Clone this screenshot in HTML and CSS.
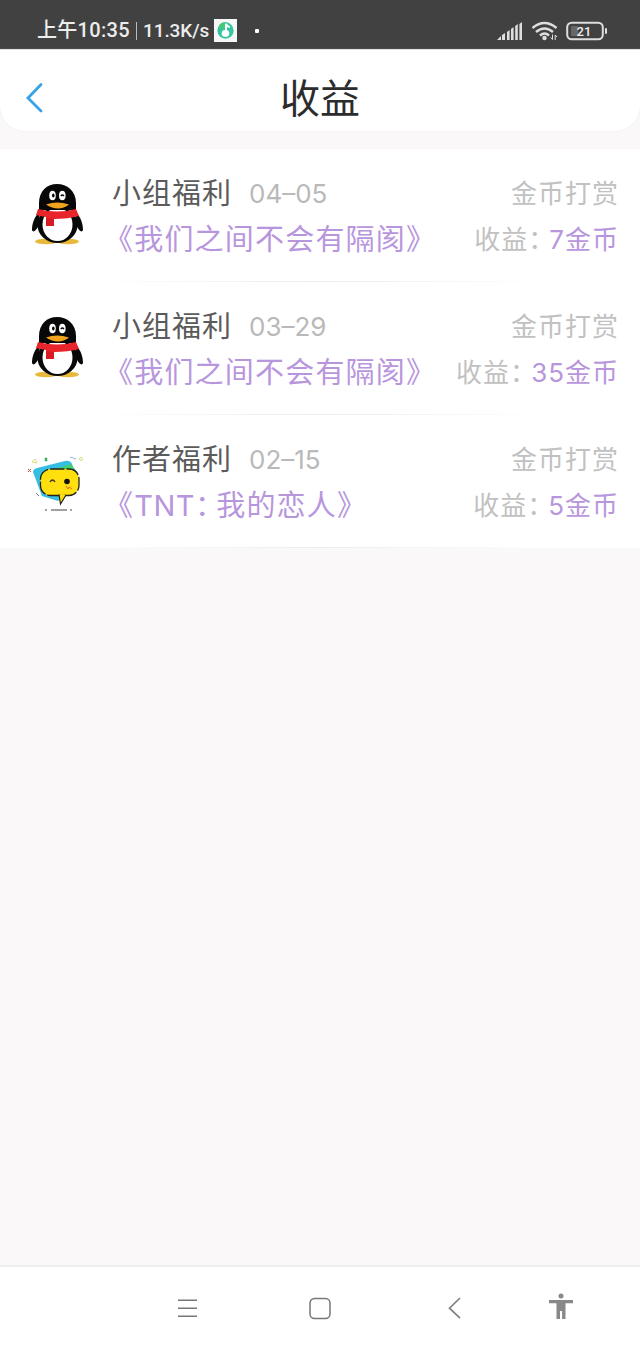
FILE: index.html
```html
<!DOCTYPE html>
<html lang="zh-CN">
<head>
<meta charset="utf-8">
<title>收益</title>
<link rel="stylesheet" href="styles.css">
</head>
<body>
<svg width="0" height="0" class="defs">
  <symbol id="penguin" viewBox="0 0 56 64">
    <ellipse cx="17" cy="59.500" rx="11" ry="2.800" fill="#e9b93c"/><ellipse cx="39" cy="59.500" rx="11" ry="2.800" fill="#e9b93c"/>
    <path d="M11 29C5 35 3 42 3 48c1 3 4 1 7-5zM46 29c6 6 8 13 8 19-1 3-4 1-7-5z" fill="#080808"/>
    <ellipse cx="28.500" cy="43" rx="20" ry="18" fill="#080808"/>
    <ellipse cx="28.500" cy="42.500" rx="15" ry="16.500" fill="#fff"/>
    <path d="M10 28V21C10 9 18 2 28 2s19 7 19 19v7z" fill="#080808"/>
    <ellipse cx="23.500" cy="13.500" rx="3.300" ry="4.700" fill="#fff"/><ellipse cx="33.300" cy="13.500" rx="3.300" ry="4.700" fill="#fff"/>
    <ellipse cx="24.300" cy="13.500" rx="1.300" ry="2" fill="#080808"/><path d="M31.800 14q1.500-2 3.200 0" fill="none" stroke="#080808" stroke-width="1.300"/>
    <path d="M17 22.500q11-4 23 0-5 4-11 4t-12-4z" fill="#f2a51c"/>
    <path d="M9 27q19 5 38 0l3 7q-11 3-25 3v7h-8v-9q-6-1-10-2z" fill="#e8252b"/>
    <path d="M17 36v8h8v-7z" fill="#d81b22"/>
  </symbol>
</svg>
<header class="status">
  <span class="time">上午10:35</span><i class="bar"></i><span class="speed">11.3K/s</span>
  <svg class="app" viewBox="0 0 24 24"><rect width="24" height="24" fill="#f7f7f7"/><circle cx="12" cy="12" r="8.500" fill="#35c6a0"/><path d="M5 7a8.500 8.500 0 0 1 8-3.400V8l-3 3z" fill="#46c878"/><ellipse cx="12" cy="15" rx="4" ry="3.600" fill="#fff"/><path d="M12.500 15V5q1 3 4 3.500" fill="none" stroke="#fff" stroke-width="2"/></svg>
  <i class="dot"></i>
  <svg class="signals" viewBox="0 0 112 22">
    <g fill="#dedede"><path d="M0 20l4-4v4zM5 15l3-2v7H5zM10 12l2.600-2v10H10zM14 9l2.600-2v13H14zM18.200 6l2.600-2v16h-2.600zM22.400 4L25 2v18h-2.600z"/></g>
    <g fill="none" stroke="#dedede" stroke-width="2.500"><path d="M35.500 8Q47.500-2 59.500 8M39 12q8.500-7 17 0M43 15.500q4.500-4 9 0"/></g>
    <circle cx="47.500" cy="18" r="2.200" fill="#dedede"/><path d="M55.500 14.500v5l-1.800-2M58.200 20v-5l1.800 2" fill="none" stroke="#dedede"/>
    <rect x="70.200" y="2.700" width="35.600" height="16.600" rx="4.500" fill="none" stroke="#dedede" stroke-width="2"/><rect x="74" y="6" width="7" height="10" rx="1" fill="#686868"/>
    <rect x="108" y="8" width="2" height="6" rx="1" fill="#dedede"/>
    <text x="87" y="15.800" text-anchor="middle" class="battery">21</text>
  </svg>
</header>
<div class="nav-wrap"><nav class="nav">
  <svg class="back" viewBox="0 0 20 34"><path d="M18 3.500L5 17l13 13" fill="none" stroke="#37a3e6" stroke-width="2.800" stroke-linecap="round"/></svg>
  <h1>收益</h1>
</nav></div>
<main class="list">
  <article class="row">
    <svg class="avatar"><use href="#penguin"/></svg>
    <div class="body">
      <div class="line"><span class="name">小组福利</span><time>04–05</time><span class="kind">金币打赏</span></div>
      <div class="line"><span class="book">《我们之间不会有隔阂》</span><span class="income">收益<span class="colon">：</span><b>7金币</b></span></div>
    </div>
  </article>
  <article class="row">
    <svg class="avatar"><use href="#penguin"/></svg>
    <div class="body">
      <div class="line"><span class="name">小组福利</span><time>03–29</time><span class="kind">金币打赏</span></div>
      <div class="line"><span class="book">《我们之间不会有隔阂》</span><span class="income">收益<span class="colon">：</span><b>35金币</b></span></div>
    </div>
  </article>
  <article class="row">
    <svg class="avatar chat" viewBox="0 0 56 64">
      <path d="M4 14q0-3 4-4l28-7q5-1 7 3l6 20-20 17-16-5z" fill="#35bde2"/><path d="M13 15L42 6l6 8-32 22q-3-2-5-17z" fill="#42cf72"/>
      <rect x="11.500" y="11" width="38.500" height="26.500" rx="10" fill="#ffdf0d" stroke="#24221a" stroke-width="1.300" stroke-dasharray="14 2"/>
      <path d="M30 36.500l1.500 9.500L37 37" fill="#ffdf0d" stroke="#24221a" stroke-width="1.200"/>
      <path d="M21 24q2.500-4 5 0" fill="none" stroke="#333" stroke-width="1.300"/><circle cx="38" cy="23.500" r="2.800" fill="#111"/>
      <path d="M37 28l2 3 1-2 3 2" fill="none" stroke="#e96a28"/>
      <path d="M16 52h2M22 52h16M41 52h2" stroke="#444" stroke-width="1.200"/>
      <path d="M-1 11l3 3m0-3l-3 3" stroke="#b45b3f"/><path d="M16 0l2 3m0-3l-2 3" stroke="#3aae68" stroke-width="1.500"/><path d="M3 4l3-3 2 4z" fill="none" stroke="#d9dc72"/><path d="M41 0l2-1 2 2 2-1" fill="none" stroke="#8bbaf0"/><circle cx="52" cy="1" r="1.500" fill="none" stroke="#d7df80"/><path d="M7 35l3 3" stroke="#777"/>
    </svg>
    <div class="body">
      <div class="line"><span class="name">作者福利</span><time>02–15</time><span class="kind">金币打赏</span></div>
      <div class="line"><span class="book">《<span class="latin">TNT</span><span class="colon">：</span>我的恋人》</span><span class="income">收益<span class="colon">：</span><b>5金币</b></span></div>
    </div>
  </article>
</main>
<footer class="keys">
  <svg viewBox="0 0 24 28"><path d="M3 5.300h19M3 13.300h19M3 21.300h19" stroke="#777" stroke-width="1.500"/></svg>
  <svg viewBox="0 0 24 28"><rect x="2" y="3.500" width="20" height="20" rx="4.500" fill="none" stroke="#777" stroke-width="1.500"/></svg>
  <svg viewBox="0 0 24 28"><path d="M19 3L8.500 13.200l10.500 10" fill="none" stroke="#808080" stroke-width="1.700"/></svg>
  <svg viewBox="0 0 24 28"><circle cx="13" cy="1" r="2.500" fill="#888"/><path d="M1 5h24v3.200h-7.500v15.800h-3.400V16H12v8H8.500V8.200H1z" fill="#888"/></svg>
</footer>
</body>
</html>
```
FILE: styles.css
```css
* { box-sizing: border-box; }
body { margin: 0; width: 640px; height: 1351px; display: flex; flex-direction: column; background: #faf8f9; font-family: "Inter", "Noto Sans CJK SC", sans-serif; overflow: hidden; }
.defs { display: block; position: absolute; }
.status { height: 49px; flex: none; display: flex; align-items: center; padding: 12px 31px 0 37px; background: #414141; color: #ededed; font: 500 19px/37px Roboto, "Noto Sans CJK SC", sans-serif; white-space: nowrap; }
.time { width: 99px; font-size: 20px; letter-spacing: 0.3px; }
.bar { width: 1px; height: 18px; background: #bbb; }
.speed { margin-left: 6px; width: 71px; letter-spacing: -0.1px; }
.app { width: 23px; height: 23px; }
.dot { width: 4px; height: 4px; border-radius: 1px; margin-left: 18px; background: #fff; }
.signals { width: 112px; height: 22px; margin-left: auto; }
.battery { font: 500 13px Roboto, sans-serif; fill: #eee; }
.nav-wrap { flex: none; height: 100px; border-top: 1px solid #dedede; }
.nav { height: 81px; display: grid; grid-template-columns: 60px 1fr 60px; align-items: center; padding: 14px 0 0; border-radius: 0 0 25px 25px; background: #fff; box-shadow: 0 0 2px #eae8e9; }
.back { width: 20px; height: 34px; margin-left: 23px; }
h1 { margin: 2px 0 0; text-align: center; font-size: 40px; line-height: 60px; font-weight: 400; color: #2c2c2c; }
.list { background: #fff; }
.row { height: 133px; display: flex; padding: 22px 21px 0 29px; background: linear-gradient(90deg, transparent 14%, #ececec 50%, transparent 86%) bottom / 100% 1px no-repeat; }
.avatar { width: 56px; height: 64px; margin-top: 11px; flex: none; overflow: visible; }
.chat { margin-top: 21px; }
.body { flex: 1; margin-left: 27px; }
.line { height: 46px; display: flex; align-items: center; white-space: nowrap; line-height: 46px; }
.name { font-size: 29px; letter-spacing: 1px; color: #5b5b5b; }
time { margin-left: 17px; font-size: 26px; color: #b9b9b9; }
.kind, .income { margin-left: auto; font-size: 26px; letter-spacing: 1px; color: #c1c1c1; }
.book { margin-left: -8px; font-size: 29px; letter-spacing: 1.200px; color: #b896dd; }
.colon { font-feature-settings: "halt"; margin-right: 7px; }
.book .colon { margin-right: 5.500px; }
.latin { letter-spacing: 0.5px; }
b { font-weight: 400; color: #b896dd; }
.keys { flex: none; height: 86px; margin-top: auto; display: grid; grid-template-columns: 42px 42px 42px 42px; column-gap: 91px; padding: 28px 0 0 167px; background: #fff; border-top: 2px solid #f0eeef; }
.keys svg { width: 24px; height: 28px; margin-left: 8px; overflow: visible; }
.keys svg:last-child { margin-left: -18px; }
```
